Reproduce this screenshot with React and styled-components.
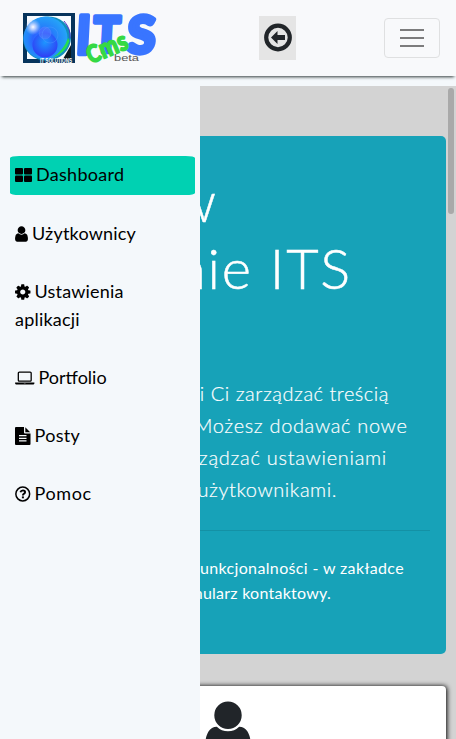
import React from "react";
import styled, { createGlobalStyle } from "styled-components";

const GlobalStyle = createGlobalStyle`
  *, *::before, *::after { box-sizing: border-box; }
  html, body, #root { height: 100%; margin: 0; overflow: hidden; }
  body { background: #f4f8fb; color: #212529; font-family: Lato, sans-serif; }
`;

const Page = styled.div`
  height: 100vh;
  display: flex;
  flex-direction: column;
  gap: 10px;
`;
const Header = styled.header`
  position: relative;
  height: 76px;
  flex: none;
  display: flex;
  align-items: center;
  justify-content: space-between;
  padding: 0 16px 0 22px;
  background: #f8f9fb;
  box-shadow: 0 3px 3px -2px #303a3a;
`;
const Brand = styled.a`
  display: block;
  width: 136px;
  height: 54px;
`;
const BackButton = styled.button`
  width: 37px;
  height: 44px;
  padding: 0;
  margin-right: -13px;
  border: 0;
  background: #e5e5e5;
  display: grid;
  place-items: center;
`;
const Toggler = styled.button`
  width: 56px;
  height: 40px;
  padding: 0;
  border: 1px solid #dfe0e1;
  border-radius: 4px;
  background: transparent;
  display: flex;
  flex-direction: column;
  align-items: center;
  justify-content: center;
  gap: 6px;
`;
const TogglerBar = styled.span`
  width: 24px;
  height: 2px;
  background: #7c7c7d;
`;
const Body = styled.div`
  flex: 1;
  min-height: 0;
  display: grid;
  grid-template-columns: minmax(0, 1fr);
  position: relative;
  overflow: hidden;
`;
const Main = styled.main`
  background: #d3d3d3;
  padding: 50px 10px 0;
  overflow: hidden;
`;
const Sidebar = styled.nav`
  position: absolute;
  inset: 0 auto 0 0;
  width: 200px;
  padding: 70px 5px 0 10px;
  background: #f4f8fb;
  display: flex;
  flex-direction: column;
  gap: 20px;
`;
const NavItem = styled.a`
  padding: ${(p) => (p.$active ? "4px 5px 7px" : "4px 5px 6px")};
  border-radius: 5%;
  background: ${(p) => (p.$active ? "#00d1b2" : "transparent")};
  color: #000;
  font-size: 18px;
  line-height: 28px;
  letter-spacing: ${(p) => p.$spacing || 0}px;
  white-space: pre-line;
`;
const NavIcon = styled.svg`
  display: inline-block;
  width: ${(p) => p.$w}px;
  height: 18px;
  margin-right: ${(p) => p.$gap || 4}px;
  vertical-align: -2.5px;
  fill: currentColor;
`;
const Thumb = styled.div`
  position: absolute;
  top: 2px;
  right: 2px;
  width: 6px;
  height: 126px;
  border-radius: 3px;
  background: #a9a9a9;
`;
const Jumbotron = styled.section`
  height: 518px;
  padding: 31px 16px 32px;
  border-radius: 5px;
  background: #17a2b8;
  color: #fff;
`;
const Title = styled.h1`
  margin: 0 0 8px;
  font-size: 56px;
  font-weight: 300;
  line-height: 67.2px;
  -webkit-text-stroke: 0.5px #fff;
`;
const Lead = styled.p`
  margin: 0;
  font-size: 20px;
  font-weight: 300;
  line-height: 32px;
  -webkit-text-stroke: 0.2px #fff;
`;
const Note = styled.p`
  margin: 0;
  font-size: 16px;
  line-height: 25.6px;
`;
const Line = styled.span`
  display: flex;
  justify-content: flex-end;
  width: ${(p) => p.$end}px;
  letter-spacing: ${(p) => p.$spacing || 0}px;
  white-space: nowrap;
`;
const Rule = styled.hr`
  margin: 25px 0 24px;
  border: 0;
  border-top: 1px solid rgba(0, 0, 0, 0.1);
`;
const Card = styled.section`
  margin-top: 32px;
  height: 180px;
  padding-top: 11px;
  border-radius: 4px;
  background: #fff;
  box-shadow: 1px 0 5px #000;
  display: flex;
  justify-content: center;
  align-items: flex-start;
`;

const USER =
  "M1536 1399q0 109-62.5 187t-150.5 78h-854q-88 0-150.5-78t-62.5-187q0-85 8.5-160.5t31.5-152 58.5-131 94-89 134.5-34.5q131 128 313 128t313-128q76 0 134.5 34.5t94 89 58.5 131 31.5 152 8.5 160.5zm-256-887q0 159-112.5 271.5t-271.5 112.5-271.5-112.5-112.5-271.5 112.5-271.5 271.5-112.5 271.5 112.5 112.5 271.5z";
const COG =
  "M1152 896q0-106-75-181t-181-75-181 75-75 181 75 181 181 75 181-75 75-181zm512-109v222q0 12-8 23t-20 13l-185 28q-19 54-39 91 35 50 107 138 10 12 10 25t-9 23q-27 37-99 108t-94 71q-12 0-26-9l-138-108q-44 23-91 38-16 136-29 186-7 28-36 28h-222q-14 0-24.5-8.5t-11.5-21.5l-28-184q-49-16-90-37l-141 107q-10 9-25 9-14 0-25-11-126-114-165-168-7-10-7-23 0-12 8-23 15-21 51-66.5t54-70.5q-27-50-41-99l-183-27q-13-2-21-12.5t-8-23.5v-222q0-12 8-23t19-13l186-28q14-46 39-92-40-57-107-138-10-12-10-24 0-10 9-23 26-36 98.5-107.5t94.5-71.5q13 0 26 10l138 107q44-23 91-38 16-136 29-186 7-28 36-28h222q14 0 24.5 8.5t11.5 21.5l28 184q49 16 90 37l142-107q9-9 24-9 13 0 25 10 129 119 165 170 7 8 7 22 0 12-8 23-15 21-51 66.5t-54 70.5q26 50 41 98l183 28q13 2 21 12.5t8 23.5z";
const LAPTOP =
  "M416 1280q-66 0-113-47t-47-113v-704q0-66 47-113t113-47h1088q66 0 113 47t47 113v704q0 66-47 113t-113 47h-1088zm-32-864v704q0 13 9.5 22.5t22.5 9.5h1088q13 0 22.5-9.5t9.5-22.5v-704q0-13-9.5-22.5t-22.5-9.5h-1088q-13 0-22.5 9.5t-9.5 22.5zm1376 928h160v96q0 40-47 68t-113 28h-1600q-66 0-113-28t-47-68v-96h1760zm-720 96q16 0 16-16t-16-16h-160q-16 0-16 16t16 16h160z";

function Logo() {
  return (
    <svg width="136" height="54" viewBox="22 11 136 54" overflow="visible">
      <defs>
        <radialGradient id="ball" cx="0.42" cy="0.55" r="0.6">
          <stop offset="0" stopColor="#249dff" />
          <stop offset="0.35" stopColor="#2c63ff" />
          <stop offset="0.55" stopColor="#2583fa" />
          <stop offset="1" stopColor="#25a6f7" />
        </radialGradient>
        <radialGradient id="inner" cx="0.5" cy="0.4" r="0.6">
          <stop offset="0" stopColor="#1d96ff" />
          <stop offset="1" stopColor="#303df5" />
        </radialGradient>
        <radialGradient id="glow">
          <stop offset="0" stopColor="#fff" />
          <stop offset="0.35" stopColor="#d6dcff" stopOpacity="0.8" />
          <stop offset="1" stopColor="#a6c5ff" stopOpacity="0" />
        </radialGradient>
      </defs>
      <rect x="23" y="13" width="52" height="50" fill="#07345c" />
      <rect x="27" y="16" width="44" height="43" fill="#f7fbff" />
      <path d="M63 59l8-14v14z" fill="#0b1a20" />
      <ellipse cx="47" cy="38.5" rx="24" ry="22" fill="#118fbd" transform="rotate(-12 47 38)" />
      <ellipse cx="45.500" cy="38" rx="22" ry="21.500" fill="url(#ball)" />
      <path d="M69.500 41Q66 53 52 58Q64 50 68 38Z" fill="#27dc51" />
      <path d="M64 21Q71 29 70 38" fill="none" stroke="#5735c6" />
      <circle cx="45" cy="45" r="12.500" fill="url(#inner)" />
      <circle cx="45" cy="33" r="6" fill="#6d7bff" fillOpacity="0.4" stroke="#578bff" strokeWidth="0.500" />
      <circle cx="50" cy="35" r="8" fill="none" stroke="#5b9cff" strokeWidth="0.600" opacity="0.600" />
      <circle cx="33" cy="27" r="8" fill="url(#glow)" />
      <text x="40" y="62.500" textLength="32" lengthAdjust="spacingAndGlyphs" fontFamily="Liberation Sans" fontWeight="700" fontSize="6.500" fill="#fff">IT SOLUTIONS</text>
      <g fontFamily="Lato, sans-serif" fontWeight="900" fill="#3975ff" stroke="#3975ff" strokeWidth="4.500" strokeLinejoin="round">
        <text transform="translate(75.500 53.500) skewX(-3) scale(.88 1)" fontSize="53">I</text>
        <text transform="translate(92.500 51.500) skewX(-3) scale(.9 1)" fontSize="49">T</text>
        <text transform="translate(126.500 53) skewX(-3) scale(1 1)" fontSize="51">S</text>
      </g>
      <text transform="translate(90.500 64) rotate(-22) scale(.83 1)" fontFamily="Lato, sans-serif" fontWeight="900" fontSize="27" letterSpacing="0.300" fill="#35d944" stroke="#35d944" strokeWidth="1.600" strokeLinejoin="round">
        <tspan fontSize="24">C</tspan>ms
      </text>
      <text x="114" y="61" textLength="25" lengthAdjust="spacingAndGlyphs" fontFamily="Liberation Sans" fontSize="9" fill="#555">beta</text>
    </svg>
  );
}

export default function App() {
  return (
    <>
      <GlobalStyle />
      <Page>
        <Header>
          <Brand href="#"><Logo /></Brand>
          <BackButton aria-label="Wstecz">
            <svg width="30" height="30" viewBox="0 0 30 30">
              <circle cx="15" cy="14.500" r="11.800" fill="none" stroke="#212529" strokeWidth="4.200" />
              <path d="M8 14.500L14.500 8V12H22V17H14.500V21Z" fill="#212529" />
            </svg>
          </BackButton>
          <Toggler aria-label="Menu"><TogglerBar /><TogglerBar /><TogglerBar /></Toggler>
        </Header>
        <Body>
          <Main>
            <Jumbotron>
              <Title>
                <Line $end={190}>Witamy w</Line>
                <Line $end={326} $spacing={1.8}>systemie ITS</Line>
                <Line $end={120}>CMS</Line>
              </Title>
              <Lead>
                <Line $end={363} $spacing={0.52}>System pozwoli Ci zarządzać treścią</Line>
                <Line $end={381.5} $spacing={0.65}>Twojej strony. Możesz dodawać nowe</Line>
                <Line $end={361} $spacing={0.7}>wpisy oraz zarządzać ustawieniami</Line>
                <Line $end={311} $spacing={0.55}>aplikacji i użytkownikami.</Line>
              </Lead>
              <Rule />
              <Note>
                <Line $end={378} $spacing={0.36}>Więcej funkcjonalności - w zakładce</Line>
                <Line $end={305} $spacing={0.25}>Pomoc jest formularz kontaktowy.</Line>
              </Note>
            </Jumbotron>
            <Card>
              <svg width="46" height="64" viewBox="256 0 1280 1792" fill="#212529"><path d={USER} /></svg>
            </Card>
          </Main>
          <Thumb />
          <Sidebar>
            <NavItem $active $spacing={0.3}>
              <NavIcon $w={17} viewBox="0 0 17 18">
                <rect y="2" width="8" height="6.500" rx="1" /><rect x="9" y="2" width="8" height="6.500" rx="1" />
                <rect y="9.500" width="8" height="6.500" rx="1" /><rect x="9" y="9.500" width="8" height="6.500" rx="1" />
              </NavIcon>
              Dashboard
            </NavItem>
            <NavItem $spacing={0.2}>
              <NavIcon $w={13} viewBox="256 0 1280 1792"><path d={USER} /></NavIcon>Użytkownicy
            </NavItem>
            <NavItem $spacing={0.2}>
              <NavIcon $w={15.5} viewBox="128 0 1536 1792"><path d={COG} /></NavIcon>{"Ustawienia\naplikacji"}
            </NavItem>
            <NavItem>
              <NavIcon $w={19.5} viewBox="0 0 1920 1792"><path d={LAPTOP} /></NavIcon>Portfolio
            </NavItem>
            <NavItem $spacing={0.3}>
              <NavIcon $w={15.5} viewBox="0 0 15.500 18">
                <path fillRule="evenodd" d="M1 0H9V5.500Q9 6.500 10 6.500H15.500V17Q15.500 18 14.500 18H1Q0 18 0 17V1Q0 0 1 0ZM4 8V9.300H11.500V8ZM4 10.700V12H11.500V10.700ZM4 13.300V14.600H11.500V13.300Z" />
                <path d="M10.300 .3L15.200 5.300H10.300Z" />
              </NavIcon>Posty
            </NavItem>
            <NavItem $spacing={0.6}>
              <NavIcon $w={15.5} viewBox="0 0 15.500 18">
                <circle cx="7.750" cy="9" r="6.900" fill="none" stroke="currentColor" strokeWidth="1.500" />
                <path d="M5.400 7.300Q6 5.400 7.900 5.400Q10.100 5.500 10.100 7.200Q10 8.300 8.800 8.900Q7.900 9.400 7.900 10.500" fill="none" stroke="currentColor" strokeWidth="1.900" />
                <rect x="6.900" y="11.400" width="2" height="1.900" />
              </NavIcon>Pomoc
            </NavItem>
          </Sidebar>
        </Body>
      </Page>
    </>
  );
}
